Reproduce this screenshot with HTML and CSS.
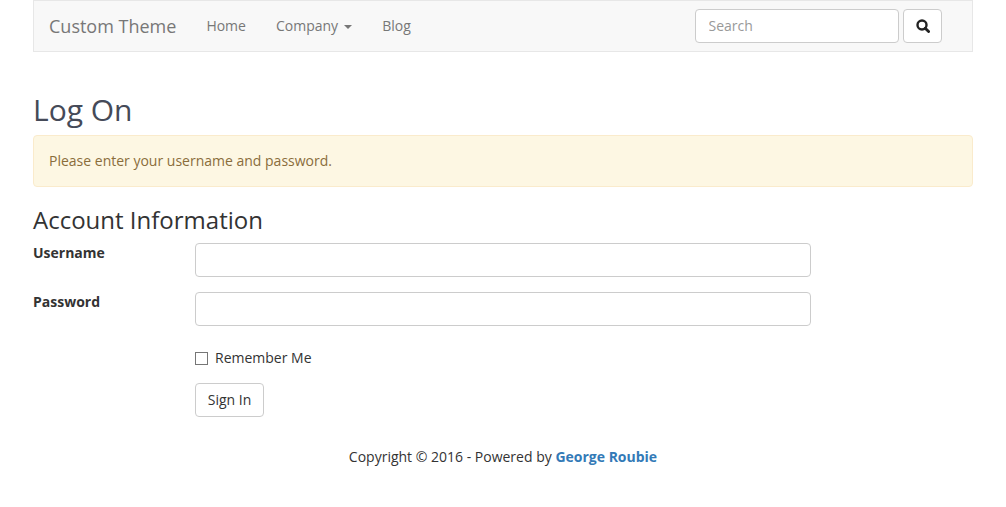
FILE: index.html
```
<!DOCTYPE html>
<html lang="en">
<head>
<meta charset="utf-8">
<title>Log On</title>
<link rel="stylesheet" href="styles.css">
</head>
<body>
<div class="container">
  <nav class="navbar">
    <a class="brand" href="#">Custom Theme</a>
    <ul class="nav">
      <li><a href="#">Home</a></li>
      <li><a href="#">Company <span class="caret"></span></a></li>
      <li class="blog"><a href="#">Blog</a></li>
    </ul>
    <form class="search">
      <input class="control search-input" type="text" placeholder="Search">
      <button class="btn search-btn" type="button" aria-label="Search">
        <svg width="14" height="14" viewBox="0 0 14 14"><circle cx="6" cy="6" r="4.5" fill="none" stroke="#222" stroke-width="2.4"/><path d="M9.2 9.2L12.6 12.6" stroke="#222" stroke-width="2.8" stroke-linecap="round"/></svg>
      </button>
    </form>
  </nav>
  <h1>Log On</h1>
  <div class="alert">Please enter your username and password.</div>
  <h2>Account Information</h2>
  <form class="login">
    <div class="row">
      <label class="label" for="u">Username</label>
      <input class="control field" id="u" type="text">
    </div>
    <div class="row">
      <label class="label" for="p">Password</label>
      <input class="control field" id="p" type="password">
    </div>
    <label class="check"><span class="box"></span>Remember Me</label>
    <button class="btn signin" type="button">Sign In</button>
  </form>
  <footer class="footer">Copyright © 2016 - Powered by <a href="#">George Roubie</a></footer>
</div>
</body>
</html>
```
FILE: styles.css
```
* { box-sizing: border-box; }
html, body { margin: 0; padding: 0; }
body {
  font-family: "Open Sans", sans-serif;
  font-size: 14px;
  line-height: 20px;
  color: #333;
  background: #fff;
}
.container { width: 940px; margin-left: 33px; }
.navbar {
  display: flex;
  align-items: center;
  height: 52px;
  background: #f8f8f8;
  border: 1px solid #e7e7e7;
  padding: 0 30px 0 15px;
}
.brand { font-size: 18px; color: #777; text-decoration: none; margin-right: 15px; }
.nav { display: flex; list-style: none; margin: 0; padding: 0; }
.nav a { display: block; padding: 0 15px; color: #777; text-decoration: none; }
.blog { margin-left: 0.5px; }
.caret {
  display: inline-block;
  width: 0; height: 0;
  margin-left: 2px;
  vertical-align: middle;
  border-top: 4px solid #777;
  border-left: 4px solid transparent;
  border-right: 4px solid transparent;
}
.search { display: flex; gap: 4px; margin-left: auto; }
.control {
  height: 34px;
  background: #fff;
  border: 1px solid #ccc;
  border-radius: 4px;
  padding: 5px 12px 7px;
  font: inherit;
  color: #555;
}
.control::placeholder { color: #999; opacity: 1; }
.search-input { width: 204px; padding-left: 12.5px; }
.btn {
  height: 34px;
  background: #fff;
  border: 1px solid #ccc;
  border-radius: 4px;
  padding: 6px 12px;
  font: inherit;
  color: #333;
}
.search-btn { width: 39px; display: flex; align-items: center; justify-content: flex-start; padding: 0 0 0 12px; }
h1 { font-size: 30px; line-height: 33px; font-weight: 400; color: #454a58; margin: 41px 0 9px; }
.alert {
  height: 52px;
  padding: 15px;
  background: #fdf7e3;
  border: 1px solid #faebcc;
  border-radius: 4px;
  color: #8a6d3b;
}
h2 { font-size: 24px; line-height: 26px; font-weight: 400; margin: 20px 0 10px; color: #333; }
.login { display: flex; flex-direction: column; align-items: flex-start; }
.row { display: flex; margin-bottom: 15px; }
.label { width: 162px; font-weight: 700; }
.field { width: 616px; }
.check { display: flex; align-items: center; margin: 7px 0 15px 162px; }
.box { width: 13px; height: 13px; border: 1px solid #767676; background: #fff; margin-right: 7px; }
.signin { margin-left: 162px; width: 69px; padding: 6px 0; }
.footer { text-align: center; margin-top: 30px; }
.footer a { color: #337ab7; font-weight: 700; text-decoration: none; }
```
